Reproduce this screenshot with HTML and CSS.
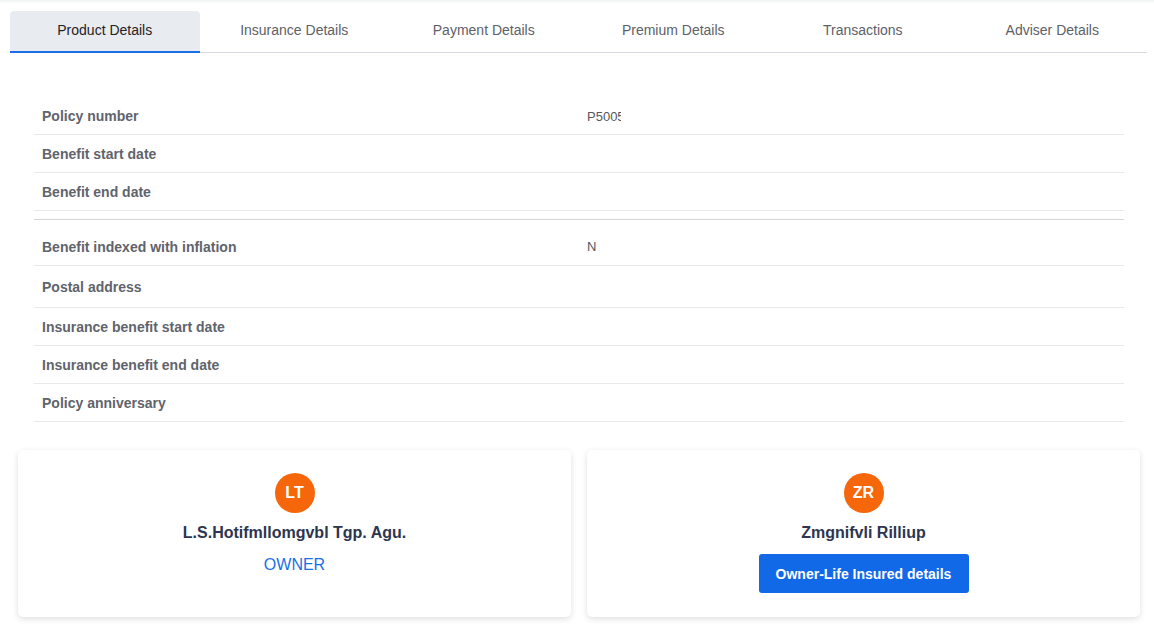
FILE: index.html
```html
<!DOCTYPE html>
<html lang="en">
<head>
<meta charset="utf-8">
<title>Product Details</title>
<link rel="stylesheet" href="styles.css">
</head>
<body>
<div class="top-edge"></div>
<nav class="tabs">
  <div class="tab active">Product Details</div>
  <div class="tab">Insurance Details</div>
  <div class="tab">Payment Details</div>
  <div class="tab">Premium Details</div>
  <div class="tab">Transactions</div>
  <div class="tab">Adviser Details</div>
</nav>

<section class="details">
  <div class="group">
    <div class="row"><div class="label">Policy number</div><div class="value"><span class="clip">P5005</span></div></div>
    <div class="row"><div class="label">Benefit start date</div><div class="value"></div></div>
    <div class="row"><div class="label">Benefit end date</div><div class="value"></div></div>
  </div>
  <div class="group second">
    <div class="row"><div class="label">Benefit indexed with inflation</div><div class="value">N</div></div>
    <div class="row tall"><div class="label">Postal address</div><div class="value"></div></div>
    <div class="row"><div class="label">Insurance benefit start date</div><div class="value"></div></div>
    <div class="row"><div class="label">Insurance benefit end date</div><div class="value"></div></div>
    <div class="row"><div class="label">Policy anniversary</div><div class="value"></div></div>
  </div>
</section>

<section class="cards">
  <div class="card">
    <div class="avatar">LT</div>
    <div class="name">L.S.Hotifmllomgvbl Tgp. Agu.</div>
    <div class="role">OWNER</div>
  </div>
  <div class="card">
    <div class="avatar">ZR</div>
    <div class="name">Zmgnifvli Rilliup</div>
    <button class="btn">Owner-Life Insured details</button>
  </div>
</section>
</body>
</html>
```

FILE: styles.css
```css
* { box-sizing: border-box; }
html, body { margin: 0; padding: 0; background: #fff; }
body {
  font-family: "Liberation Sans", Arial, sans-serif;
  width: 1154px;
  height: 627px;
  overflow: hidden;
}
.top-edge {
  height: 4px;
  background: linear-gradient(#f1f2f3, #ffffff);
}
.tabs {
  display: grid;
  grid-template-columns: repeat(6, 1fr);
  margin: 7px 7px 0 10px;
  border-bottom: 1px solid #d5d9df;
}
.tab {
  height: 42px;
  display: flex;
  align-items: center;
  justify-content: center;
  font-size: 14px;
  color: #5d6168;
  padding-bottom: 2px;
  margin-bottom: -1px;
  border-bottom: 2px solid transparent;
}
.tab.active {
  background: #e8ebef;
  color: #1f2226;
  border-radius: 4px 4px 0 0;
  border-bottom-color: #1a6fe6;
}
.details {
  margin: 44px 30px 0 34px;
}
.row {
  display: grid;
  grid-template-columns: 1fr 1fr;
  height: 38px;
  align-items: center;
  border-bottom: 1px solid #e9e9ea;
}
.row.tall { height: 42px; }
.label {
  padding-left: 8px;
  font-size: 14px;
  font-weight: bold;
  color: #5f646c;
}
.value {
  padding-left: 8px;
  font-size: 13px;
  color: #54585e;
}
.clip {
  display: inline-block;
  width: 34px;
  overflow: hidden;
  white-space: nowrap;
  vertical-align: middle;
}
.group.second {
  margin-top: 8px;
  border-top: 1px solid #d4d5d7;
  padding-top: 8px;
}
.cards {
  display: grid;
  grid-template-columns: 1fr 1fr;
  gap: 16px;
  margin: 28px 14px 0 18px;
}
.card {
  background: #fff;
  border-radius: 5px;
  box-shadow: 0 2px 6px rgba(0, 0, 0, 0.13);
  display: flex;
  flex-direction: column;
  align-items: center;
  padding: 23px 0 24px;
}
.avatar {
  width: 40px;
  height: 40px;
  border-radius: 50%;
  background: #f6670b;
  color: #fff;
  font-weight: bold;
  font-size: 16px;
  display: flex;
  align-items: center;
  justify-content: center;
}
.name {
  margin-top: 10px;
  font-size: 16px;
  line-height: 20px;
  font-weight: bold;
  color: #2d3550;
}
.role {
  margin-top: 12px;
  font-size: 16px;
  line-height: 20px;
  color: #1a6fe6;
}
.btn {
  margin-top: 11px;
  height: 39px;
  width: 210px;
  border: none;
  border-radius: 3px;
  background: #1169e8;
  color: #fff;
  font-family: "Liberation Sans", Arial, sans-serif;
  font-size: 14px;
  font-weight: bold;
}
```
